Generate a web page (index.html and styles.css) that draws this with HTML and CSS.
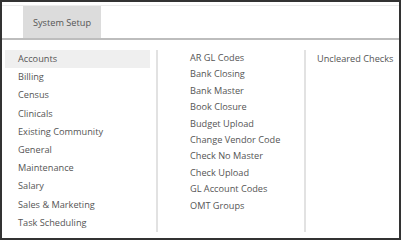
FILE: index.html
```html
<!DOCTYPE html>
<html>
<head>
<meta charset="utf-8">
<link rel="stylesheet" href="styles.css">
</head>
<body>
<div class="frame">
  <div class="header">
    <div class="tabs">
      <div class="tab">System Setup</div>
    </div>
  </div>
  <div class="panel">
    <ul class="col col1">
      <li class="active">Accounts</li>
      <li>Billing</li>
      <li>Census</li>
      <li>Clinicals</li>
      <li>Existing Community</li>
      <li>General</li>
      <li>Maintenance</li>
      <li>Salary</li>
      <li>Sales &amp; Marketing</li>
      <li>Task Scheduling</li>
    </ul>
    <div class="sep"></div>
    <ul class="col col2">
      <li>AR GL Codes</li>
      <li>Bank Closing</li>
      <li>Bank Master</li>
      <li>Book Closure</li>
      <li>Budget Upload</li>
      <li>Change Vendor Code</li>
      <li>Check No Master</li>
      <li>Check Upload</li>
      <li>GL Account Codes</li>
      <li>OMT Groups</li>
    </ul>
    <div class="sep"></div>
    <ul class="col col3">
      <li>Uncleared Checks</li>
    </ul>
  </div>
</div>
</body>
</html>
```
FILE: styles.css
```css
* { box-sizing: border-box; }
html, body { margin: 0; padding: 0; background: #fff; }
.frame {
  width: 401px;
  height: 240px;
  border: 2px solid #333;
  font-family: "Open Sans", "Liberation Sans", sans-serif;
  font-size: 9.2px;
  color: #555;
  overflow: hidden;
  background: #fff;
}
.header {
  padding-top: 3px;
  border-bottom: 2px solid #bdbdbd;
}
.tabs {
  display: flex;
  height: 33px;
  border-top: 1px solid #ececec;
  padding-left: 21px;
}
.tab {
  width: 78px;
  background: #dcdcdc;
  display: flex;
  align-items: center;
  justify-content: center;
  color: #555;
}
.panel {
  display: flex;
  align-items: flex-start;
  padding-top: 10px;
  padding-left: 3px;
}
.col {
  list-style: none;
  margin: 0;
  padding: 0;
  flex-shrink: 0;
}
.col1 { width: 151px; }
.col1 li {
  height: 18.2px;
  line-height: 18.2px;
  padding-left: 13px;
  white-space: nowrap;
}
.col1 li.active { background: #efefef; margin-right: 6px; }
.sep {
  width: 2px;
  flex-shrink: 0;
  height: 182px;
  background: #e2e2e2;
}
.col2 { width: 146px; }
.col2 li {
  height: 16.4px;
  line-height: 16.4px;
  padding-left: 32px;
  white-space: nowrap;
}
.col3 li {
  line-height: 18px;
  padding-left: 11px;
  white-space: nowrap;
}
```
